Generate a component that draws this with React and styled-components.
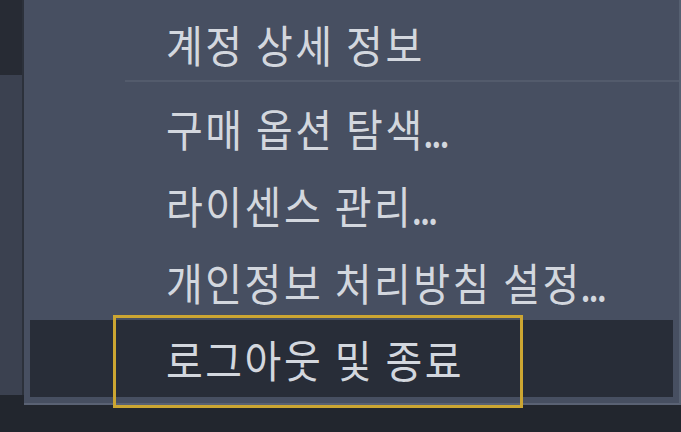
import React from 'react'
import styled, { createGlobalStyle } from 'styled-components'

const GlobalStyle = createGlobalStyle`
  html, body {
    margin: 0;
    padding: 0;
    background: #22262e;
  }
  body {
    font-family: "Noto Sans CJK KR", "Noto Sans", sans-serif;
  }
`;

const items = [
  { label: '계정 상세 정보' },
  { label: '구매 옵션 탐색', more: true },
  { label: '라이센스 관리', more: true },
  { label: '개인정보 처리방침 설정', more: true },
  { label: '로그아웃 및 종료', active: true },
];

const App = () => {
  return (
    <>
      <GlobalStyle />
      <Screen>
        <SideStrip>
          <div className="top" />
          <div className="middle" />
        </SideStrip>
        <MenuPanel>
          {items.map((item, i) => (
            <React.Fragment key={item.label}>
              <MenuItem active={item.active} first={i === 0}>
                <Label>
                  {item.label}
                  {item.more && <Ellipsis>...</Ellipsis>}
                </Label>
                {item.active && <FocusRing />}
              </MenuItem>
              {i === 0 && <Divider />}
            </React.Fragment>
          ))}
        </MenuPanel>
      </Screen>
    </>
  )
}

const Screen = styled.div`
  display: flex;
  align-items: flex-start;
  width: 681px;
  height: 432px;
  overflow: hidden;
  background: #22262e;
`;

const SideStrip = styled.div`
  display: flex;
  flex-direction: column;
  width: 22px;
  height: 395px;
  border-right: 2px solid #2c313b;

  .top {
    height: 75px;
    background: #272b34;
  }
  .middle {
    flex: 1;
    background: #3b4150;
  }
`;

const MenuPanel = styled.div`
  flex: 1;
  display: flex;
  flex-direction: column;
  padding: 8px 6px 6px 6px;
  background: #474f61;
  border-right: 2px solid #566071;
  border-bottom: 2px solid #5a6274;
`;

const MenuItem = styled.div`
  position: relative;
  display: flex;
  align-items: center;
  height: ${props => props.first ? '72px' : '77px'};
  padding-left: 136px;
  background: ${props => props.active ? '#282d38' : 'transparent'};
  color: #d3d7de;
`;

const Label = styled.span`
  display: inline-block;
  font-size: 40px;
  font-weight: 400;
  letter-spacing: 2.5px;
  line-height: 1;
  white-space: nowrap;
  transform: scaleY(1.12);
`;

const Ellipsis = styled.span`
  margin-left: -2px;
  letter-spacing: -3px;
`;

const Divider = styled.div`
  height: 2px;
  margin: 0 -6px 7px 95px;
  background: #535b6c;
`;

const FocusRing = styled.div`
  position: absolute;
  left: 83px;
  top: -5px;
  width: 410px;
  height: 93px;
  box-sizing: border-box;
  border: 3px solid #cca632;
  pointer-events: none;
`;

export default App
